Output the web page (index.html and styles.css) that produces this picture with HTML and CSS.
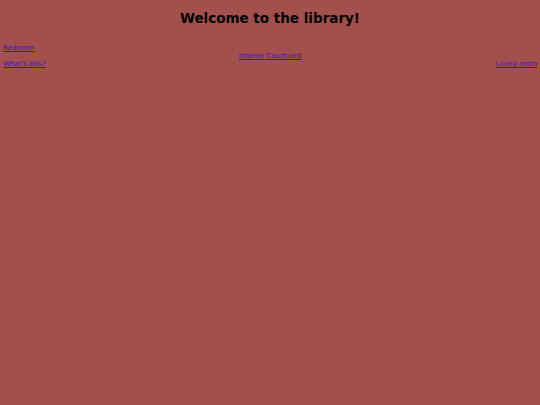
FILE: index.html
```html
<!DOCTYPE html>
<html>
<head>
<meta charset="utf-8">
<link rel="stylesheet" href="styles.css">
</head>
<body>
<h1 class="title">Welcome to the library!</h1>
<div class="rooms">
  <a class="room left-top" href="#">Bedroom</a>
  <a class="room center" href="#">Interior Courtyard</a>
  <a class="room left-bottom" href="#">What's this?</a>
  <a class="room right-bottom" href="#">Living room</a>
</div>
</body>
</html>
```
FILE: styles.css
```css
html, body {
  margin: 0;
  padding: 0;
  background: #a34f4c;
}
body {
  padding: 3px;
  font-family: "DejaVu Sans", Verdana, sans-serif;
  color: #000;
}
.title {
  margin: 6px 0 0 0;
  font-size: 13.5px;
  line-height: 18px;
  text-align: center;
  font-weight: bold;
}
.rooms {
  margin-top: 13px;
  display: grid;
  grid-template-columns: 1fr auto 1fr;
  grid-template-rows: 16px 16px;
  font-size: 7px;
  line-height: 8px;
}
.room {
  color: #3a10c8;
  text-decoration: underline;
  align-self: center;
}
.left-top { grid-column: 1; grid-row: 1; justify-self: start; }
.center { grid-column: 2; grid-row: 1 / 3; }
.left-bottom { grid-column: 1; grid-row: 2; justify-self: start; }
.right-bottom { grid-column: 3; grid-row: 2; justify-self: end; }
```
